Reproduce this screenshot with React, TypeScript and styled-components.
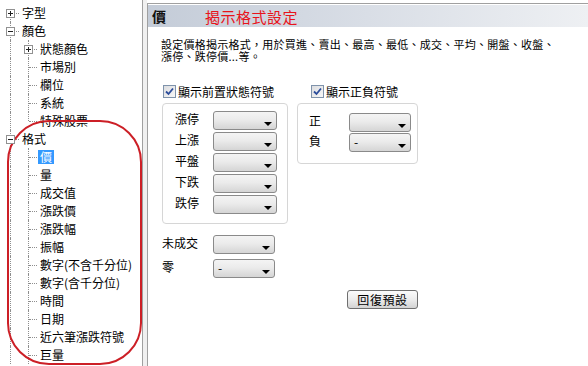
import React from 'react'
import styled, { createGlobalStyle, css } from 'styled-components'

interface TreeNode {
  label: string
  open?: boolean
  selected?: boolean
  children?: TreeNode[]
}

interface FlatRow {
  label: string
  depth: number
  guides: boolean[]
  first: boolean
  last: boolean
  expander: '+' | '-' | null
  selected: boolean
}

const GlobalStyle = createGlobalStyle`
  html, body {
    margin: 0;
    padding: 0;
    background: #ffffff;
  }
  body {
    font-family: "Noto Sans CJK TC", "Liberation Sans", sans-serif;
    font-size: 12px;
    color: #000000;
  }
`

const Screen = styled.div`
  display: flex;
  width: 588px;
  height: 366px;
  overflow: hidden;
  background: #ffffff;
`

/* left: settings tree */

const TreePane = styled.nav`
  position: relative;
  box-sizing: border-box;
  flex: 0 0 143px;
  height: 366px;
  padding: 4px 0 0 1px;
  border-right: 1px solid #a0a0a0;
  background: #ffffff;
  overflow: hidden;
`

const TreeRow = styled.div`
  display: flex;
  align-items: center;
  height: 18px;
  white-space: nowrap;
`

const dotted = '1px dotted #8e8e8e'

const Guide = styled.span<{ $line: boolean }>`
  position: relative;
  flex: 0 0 18px;
  height: 18px;
  ${({ $line }) =>
    $line &&
    css`
      &::before {
        content: '';
        position: absolute;
        left: 9px;
        top: 0;
        bottom: 0;
        border-left: ${dotted};
      }
    `}
`

const Joint = styled.span<{ $first: boolean; $last: boolean }>`
  position: relative;
  flex: 0 0 18px;
  height: 18px;
  &::before {
    content: '';
    position: absolute;
    left: 9px;
    top: ${({ $first }) => ($first ? '9px' : '0')};
    bottom: ${({ $last }) => ($last ? '9px' : '0')};
    border-left: ${dotted};
  }
  &::after {
    content: '';
    position: absolute;
    left: 10px;
    right: 0;
    top: 9px;
    border-top: ${dotted};
  }
`

const Expander = styled.span<{ $open: boolean }>`
  position: absolute;
  z-index: 1;
  left: 5px;
  top: 5px;
  box-sizing: border-box;
  width: 9px;
  height: 9px;
  border: 1px solid #919191;
  background: #ffffff;
  &::before {
    content: '';
    position: absolute;
    left: 1px;
    top: 3px;
    width: 5px;
    height: 1px;
    background: #202020;
  }
  ${({ $open }) =>
    !$open &&
    css`
      &::after {
        content: '';
        position: absolute;
        left: 3px;
        top: 1px;
        width: 1px;
        height: 5px;
        background: #202020;
      }
    `}
`

const TreeLabel = styled.span<{ $selected: boolean }>`
  margin-left: 1px;
  padding: 0 2px;
  height: 14px;
  line-height: 14px;
  font-size: 12px;
  background: ${({ $selected }) => ($selected ? '#3399ff' : 'transparent')};
  color: ${({ $selected }) => ($selected ? '#ffffff' : '#000000')};
`

const Annotation = styled.div`
  position: absolute;
  left: 7px;
  top: 120px;
  width: 135px;
  height: 245px;
  box-sizing: border-box;
  border: 2px solid #cc1f26;
  border-radius: 42px;
  pointer-events: none;
`

const Splitter = styled.div`
  flex: 0 0 4px;
  background: #f0f0f0;
`

/* right: format panel */

const Panel = styled.section`
  flex: 1;
  margin-top: 3px;
  padding: 1px 0 0 0;
  border-left: 1px solid #a0a0a0;
  border-top: 1px solid #a0a0a0;
  background: #ffffff;
`

const Header = styled.header`
  display: flex;
  align-items: center;
  height: 22px;
  padding-left: 4px;
  background: linear-gradient(to right, #c4ccd8 0%, #d9dee6 50%, #eef0f3 100%);
`

const HeaderKey = styled.span`
  width: 53px;
  font-size: 14px;
  font-weight: 700;
  color: #111111;
`

const HeaderTitle = styled.span`
  font-size: 15px;
  color: #e8141b;
  letter-spacing: 0.5px;
`

const Body = styled.div`
  padding: 11px 0 0 14px;
`

const Description = styled.p`
  margin: 0 0 0 -1px;
  font-size: 11px;
  line-height: 12px;
  letter-spacing: 0.25px;
`

const Options = styled.div`
  width: 256px;
  margin-top: 21px;
`

const Columns = styled.div`
  display: flex;
  align-items: flex-start;
  gap: 9px;
`

const Column = styled.div`
  display: flex;
  flex-direction: column;
`

const CheckRow = styled.label<{ $indent: number }>`
  display: flex;
  align-items: center;
  gap: 2px;
  height: 16px;
  margin-left: ${({ $indent }) => $indent}px;
  font-size: 12px;
`

const CheckBox = styled.span`
  display: inline-flex;
  align-items: center;
  justify-content: center;
  box-sizing: border-box;
  width: 13px;
  height: 13px;
  border: 1px solid #7f93ab;
  background: linear-gradient(135deg, #dcdde0 0%, #f7f7f7 100%);
`

const GroupBox = styled.div<{ $cols: string; $pad: string; $gap: number }>`
  display: grid;
  grid-template-columns: ${({ $cols }) => $cols};
  grid-auto-rows: 19px;
  row-gap: ${({ $gap }) => $gap}px;
  margin-top: 4px;
  padding: ${({ $pad }) => $pad};
  border: 1px solid #d6d6d6;
  border-radius: 4px;
`

const FieldLabel = styled.span`
  align-self: start;
  font-size: 12px;
  line-height: 16px;
`

const Select = styled.div<{ $w: number }>`
  position: relative;
  box-sizing: border-box;
  width: ${({ $w }) => $w}px;
  height: 19px;
  padding-left: 4px;
  border: 1px solid #8a8a8a;
  border-radius: 3px;
  background: linear-gradient(#f4f4f4 0%, #ebebeb 45%, #d5d5d5 100%);
  font-size: 12px;
  line-height: 16px;
  &::after {
    content: '';
    position: absolute;
    right: 4px;
    top: 10px;
    border-left: 4px solid transparent;
    border-right: 4px solid transparent;
    border-top: 4px solid #000000;
  }
`

const Plain = styled.div`
  display: grid;
  grid-template-columns: 51px 62px;
  grid-auto-rows: 19px;
  row-gap: 5px;
  margin-top: 11px;
`

const Actions = styled.div`
  display: flex;
  justify-content: flex-end;
  margin-top: 12px;
`

const ResetButton = styled.button`
  box-sizing: border-box;
  width: 71px;
  height: 19px;
  padding: 0;
  border: 1px solid #6f6f6f;
  border-radius: 3px;
  background: linear-gradient(#fbfbfb 0%, #ececec 50%, #d3d3d3 100%);
  font-family: inherit;
  font-size: 12px;
  line-height: 16px;
  letter-spacing: 0.6px;
  color: #000000;
`

const tree: TreeNode[] = [
  { label: '字型', children: [] },
  {
    label: '顏色',
    open: true,
    children: [
      { label: '狀態顏色', children: [] },
      { label: '市場別' },
      { label: '欄位' },
      { label: '系統' },
      { label: '特殊股票' },
    ],
  },
  {
    label: '格式',
    open: true,
    children: [
      { label: '價', selected: true },
      { label: '量' },
      { label: '成交值' },
      { label: '漲跌價' },
      { label: '漲跌幅' },
      { label: '振幅' },
      { label: '數字(不含千分位)' },
      { label: '數字(含千分位)' },
      { label: '時間' },
      { label: '日期' },
      { label: '近六筆漲跌符號' },
      { label: '巨量' },
    ],
  },
]

const continued = new Set(['格式', '巨量'])

const flatten = (nodes: TreeNode[], depth = 0, guides: boolean[] = []): FlatRow[] =>
  nodes.flatMap((node, i) => {
    const last = i === nodes.length - 1 && !continued.has(node.label)
    const row: FlatRow = {
      label: node.label,
      depth,
      guides,
      first: depth === 0 && i === 0,
      last,
      expander: node.children ? (node.open ? '-' : '+') : null,
      selected: !!node.selected,
    }
    const kids = node.open && node.children ? flatten(node.children, depth + 1, [...guides, !last]) : []
    return [row, ...kids]
  })

const rows = flatten(tree)

const Tick: React.FC = () => (
  <svg width="9" height="9" viewBox="0 0 9 9">
    <path d="M1 4.5 L3.5 7 L8 1.5" fill="none" stroke="#2b4c9b" strokeWidth="1.8" />
  </svg>
)

const SettingsTree: React.FC = () => (
  <TreePane>
    {rows.map((row) => (
      <TreeRow key={`${row.depth}-${row.label}`}>
        {row.guides.map((line, i) => (
          <Guide key={i} $line={line} />
        ))}
        <Joint $first={row.first} $last={row.last}>
          {row.expander && <Expander $open={row.expander === '-'} />}
        </Joint>
        <TreeLabel $selected={row.selected}>{row.label}</TreeLabel>
      </TreeRow>
    ))}
    <Annotation />
  </TreePane>
)

const statusFields = ['漲停', '上漲', '平盤', '下跌', '跌停']

const FormatPanel: React.FC = () => (
  <Panel>
    <Header>
      <HeaderKey>價</HeaderKey>
      <HeaderTitle>揭示格式設定</HeaderTitle>
    </Header>
    <Body>
      <Description>
        設定價格揭示格式，用於買進、賣出、最高、最低、成交、平均、開盤、收盤、
        <br />
        漲停、跌停價...等。
      </Description>
      <Options>
        <Columns>
          <Column>
            <CheckRow $indent={1}>
              <CheckBox>
                <Tick />
              </CheckBox>
              顯示前置狀態符號
            </CheckRow>
            <GroupBox $cols="38px 64px" $pad="7px 10px 9px 12px" $gap={2}>
              {statusFields.map((f) => (
                <React.Fragment key={f}>
                  <FieldLabel>{f}</FieldLabel>
                  <Select $w={64} />
                </React.Fragment>
              ))}
            </GroupBox>
          </Column>
          <Column>
            <CheckRow $indent={14}>
              <CheckBox>
                <Tick />
              </CheckBox>
              顯示正負符號
            </CheckRow>
            <GroupBox $cols="40px 62px" $pad="9px 6px 11px 11px" $gap={1}>
              <FieldLabel>正</FieldLabel>
              <Select $w={62} />
              <FieldLabel>負</FieldLabel>
              <Select $w={62}>-</Select>
            </GroupBox>
          </Column>
        </Columns>
        <Plain>
          <FieldLabel>未成交</FieldLabel>
          <Select $w={62} />
          <FieldLabel>零</FieldLabel>
          <Select $w={62}>-</Select>
        </Plain>
        <Actions>
          <ResetButton type="button">回復預設</ResetButton>
        </Actions>
      </Options>
    </Body>
  </Panel>
)

const App: React.FC = () => (
  <>
    <GlobalStyle />
    <Screen>
      <SettingsTree />
      <Splitter />
      <FormatPanel />
    </Screen>
  </>
)

export default App
